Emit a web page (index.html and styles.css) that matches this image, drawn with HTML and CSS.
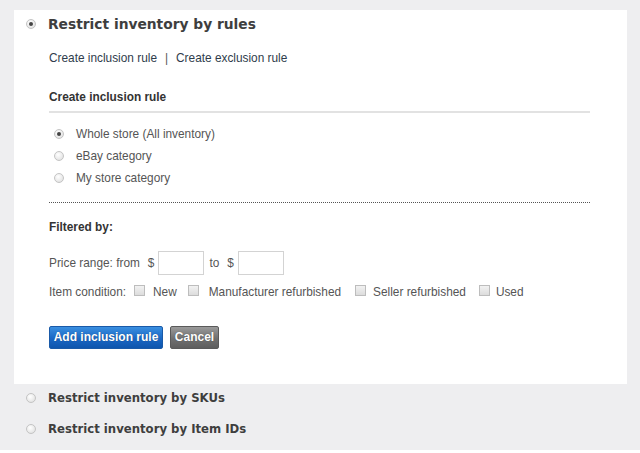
FILE: index.html
```html
<!DOCTYPE html>
<html>
<head>
<meta charset="utf-8">
<link rel="stylesheet" href="styles.css">
</head>
<body>
<div class="page">
  <div class="panel">
    <div class="section-head main">
      <span class="radio checked"></span>
      <span class="head-text">Restrict inventory by rules</span>
    </div>
    <div class="body">
      <div class="links"><a>Create inclusion rule</a><span class="sep">|</span><a>Create exclusion rule</a></div>
      <div class="sub-title">Create inclusion rule</div>
      <div class="rule-line"></div>
      <div class="options">
        <div class="opt"><span class="radio checked"></span><span>Whole store (All inventory)</span></div>
        <div class="opt"><span class="radio"></span><span>eBay category</span></div>
        <div class="opt"><span class="radio"></span><span>My store category</span></div>
      </div>
      <div class="dotted"></div>
      <div class="sub-title filt">Filtered by:</div>
      <div class="price-row">
        <span>Price range: from</span><span class="cur">$</span><span class="input"></span>
        <span class="to">to</span><span class="cur">$</span><span class="input"></span>
      </div>
      <div class="cond-row">
        <span>Item condition:</span>
        <span class="chk first"></span><span>New</span>
        <span class="chk near"></span><span>Manufacturer refurbished</span>
        <span class="chk"></span><span>Seller refurbished</span>
        <span class="chk last"></span><span>Used</span>
      </div>
      <div class="buttons">
        <span class="btn primary">Add inclusion rule</span>
        <span class="btn secondary">Cancel</span>
      </div>
    </div>
  </div>
  <div class="section-head outer first">
    <span class="radio"></span>
    <span class="head-text small">Restrict inventory by SKUs</span>
  </div>
  <div class="section-head outer">
    <span class="radio"></span>
    <span class="head-text small">Restrict inventory by Item IDs</span>
  </div>
</div>
</body>
</html>
```

FILE: styles.css
```css
html, body {
  margin: 0;
  padding: 0;
  background: #ffffff;
}
body {
  font-family: "Liberation Sans", Arial, sans-serif;
  font-size: 11.85px;
  color: #555;
}
.page {
  background: #eeeef0;
  height: 450px;
  padding-top: 10px;
  box-sizing: border-box;
}
.panel {
  margin-left: 14px;
  width: 613px;
  height: 374px;
  background: #fff;
  box-sizing: border-box;
  padding-top: 6px;
}
.section-head {
  display: flex;
  align-items: center;
  height: 16px;
  padding-left: 12px;
}
.section-head .radio {
  margin-right: 12px;
}
.head-text {
  font-family: "DejaVu Sans", Verdana, sans-serif;
  font-weight: bold;
  font-size: 13.8px;
  color: #3e3e3e;
}
.head-text.small {
  font-size: 11.7px;
}
.outer {
  padding-left: 26px;
}
.outer.first {
  margin-top: 6px;
}
.outer + .outer {
  margin-top: 15px;
}
.radio {
  display: inline-block;
  width: 10px;
  height: 10px;
  border-radius: 50%;
  border: 1px solid #c4c4c4;
  background: radial-gradient(circle at 40% 35%, #ffffff 0%, #e6e6e6 70%, #d4d4d4 100%);
  box-sizing: border-box;
  position: relative;
  flex: none;
}
.radio.checked::after {
  content: "";
  position: absolute;
  left: 2px;
  top: 2px;
  width: 4px;
  height: 4px;
  border-radius: 50%;
  background: #444;
}
.body {
  padding-left: 35px;
  width: 541px;
  box-sizing: content-box;
}
.links {
  margin-top: 19px;
  height: 14px;
  line-height: 14px;
  color: #2f3d4c;
}
.links a {
  color: #2f3d4c;
}
.sep {
  margin: 0 8px;
  color: #555;
}
.sub-title {
  font-weight: bold;
  color: #333;
  height: 14px;
  line-height: 14px;
  margin-top: 25px;
}
.rule-line {
  margin-top: 7px;
  height: 2px;
  background: #e2e2e2;
}
.options {
  margin-top: 14px;
  padding-left: 5px;
}
.opt {
  display: flex;
  align-items: center;
  height: 14px;
  line-height: 14px;
  margin-bottom: 8px;
}
.opt .radio {
  margin-right: 12px;
}
.dotted {
  margin-top: 17px;
  border-top: 1px dotted #555;
}
.sub-title.filt {
  margin-top: 17px;
}
.price-row {
  margin-top: 17px;
  display: flex;
  align-items: center;
  height: 24px;
}
.cur {
  margin-left: 8px;
  margin-right: 4px;
}
.to {
  margin-left: 5px;
}
.input {
  display: inline-block;
  width: 46px;
  height: 24px;
  border: 1px solid #d3d3d3;
  box-sizing: border-box;
  background: #fff;
}
.cond-row {
  margin-top: 10px;
  display: flex;
  align-items: center;
  height: 14px;
}
.chk {
  display: inline-block;
  width: 11px;
  height: 11px;
  border: 1px solid #bdbdbd;
  background: linear-gradient(#f2f2f2, #dcdcdc);
  box-sizing: border-box;
  margin-left: 14px;
  margin-right: 7px;
  position: relative;
  top: -2px;
  flex: none;
}
.chk.first {
  margin-left: 8px;
  margin-right: 8px;
}
.chk.near {
  margin-left: 11px;
  margin-right: 10px;
}
.chk.last {
  margin-left: 13px;
  margin-right: 6px;
}
.buttons {
  margin-top: 27px;
  display: flex;
  gap: 7px;
}
.btn {
  display: inline-block;
  height: 23px;
  line-height: 21px;
  box-sizing: border-box;
  border-radius: 2px;
  font-weight: bold;
  color: #fff;
  font-size: 12px;
  padding: 0;
  text-align: center;
  white-space: nowrap;
  text-shadow: 0 0 1px rgba(0,0,0,0.4);
}
.primary {
  width: 114px;
  background: linear-gradient(#3a8fe0, #1a67c4 55%, #0e55ad);
  border: 1px solid #1a5aa8;
}
.secondary {
  width: 49px;
  background: linear-gradient(#9a9a9a, #707070 55%, #5e5e5e);
  border: 1px solid #5a5a5a;
}
```
